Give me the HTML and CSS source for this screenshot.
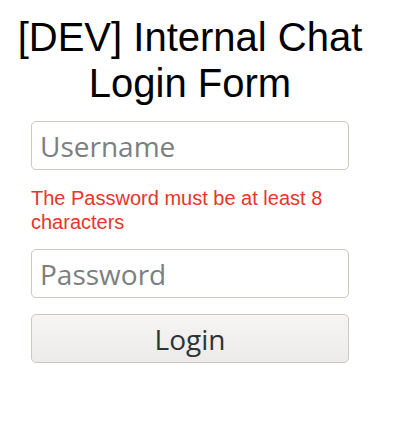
FILE: index.html
```html
<!DOCTYPE html>
<html>
<head>
<meta charset="utf-8">
<link rel="stylesheet" href="styles.css">
</head>
<body>
<div class="app">
  <h1 class="title">[DEV] Internal Chat Login Form</h1>
  <form class="form">
    <input class="field" type="text" placeholder="Username">
    <p class="error">The Password must be at least 8 characters</p>
    <input class="field" type="password" placeholder="Password">
    <button class="btn" type="button">Login</button>
  </form>
</div>
</body>
</html>
```
FILE: styles.css
```css
html, body {
  margin: 0;
  background: #ffffff;
}
body {
  padding: 8px;
}
.app {
  width: 364px;
}
.title {
  font-family: "Liberation Sans", Arial, sans-serif;
  font-weight: normal;
  font-size: 40px;
  line-height: 46px;
  text-align: center;
  color: #000;
  margin: 6px 0 15px;
}
.form {
  display: flex;
  flex-direction: column;
  padding: 0 23px;
  margin: 0;
}
.field {
  box-sizing: border-box;
  width: 100%;
  height: 49px;
  margin: 0;
  padding: 0 8px;
  border: 1px solid #cdc7c2;
  border-radius: 5px;
  background: #fff;
  font-family: "Open Sans", "Noto Sans", sans-serif;
  font-size: 28px;
  color: #2e3436;
  outline: none;
}
.field::placeholder {
  color: #7b7f80;
}
.error {
  margin: 16px 0 15px;
  font-family: "Liberation Sans", Arial, sans-serif;
  font-size: 20px;
  line-height: 24px;
  color: #e8352b;
}
.btn {
  box-sizing: border-box;
  width: 100%;
  height: 49px;
  margin-top: 16px;
  border: 1px solid #cdc7c2;
  border-radius: 5px;
  background: linear-gradient(to bottom, #f6f5f4, #edebe9);
  font-family: "Open Sans", "Noto Sans", sans-serif;
  font-size: 28px;
  color: #2e3436;
  padding: 0;
}
```
